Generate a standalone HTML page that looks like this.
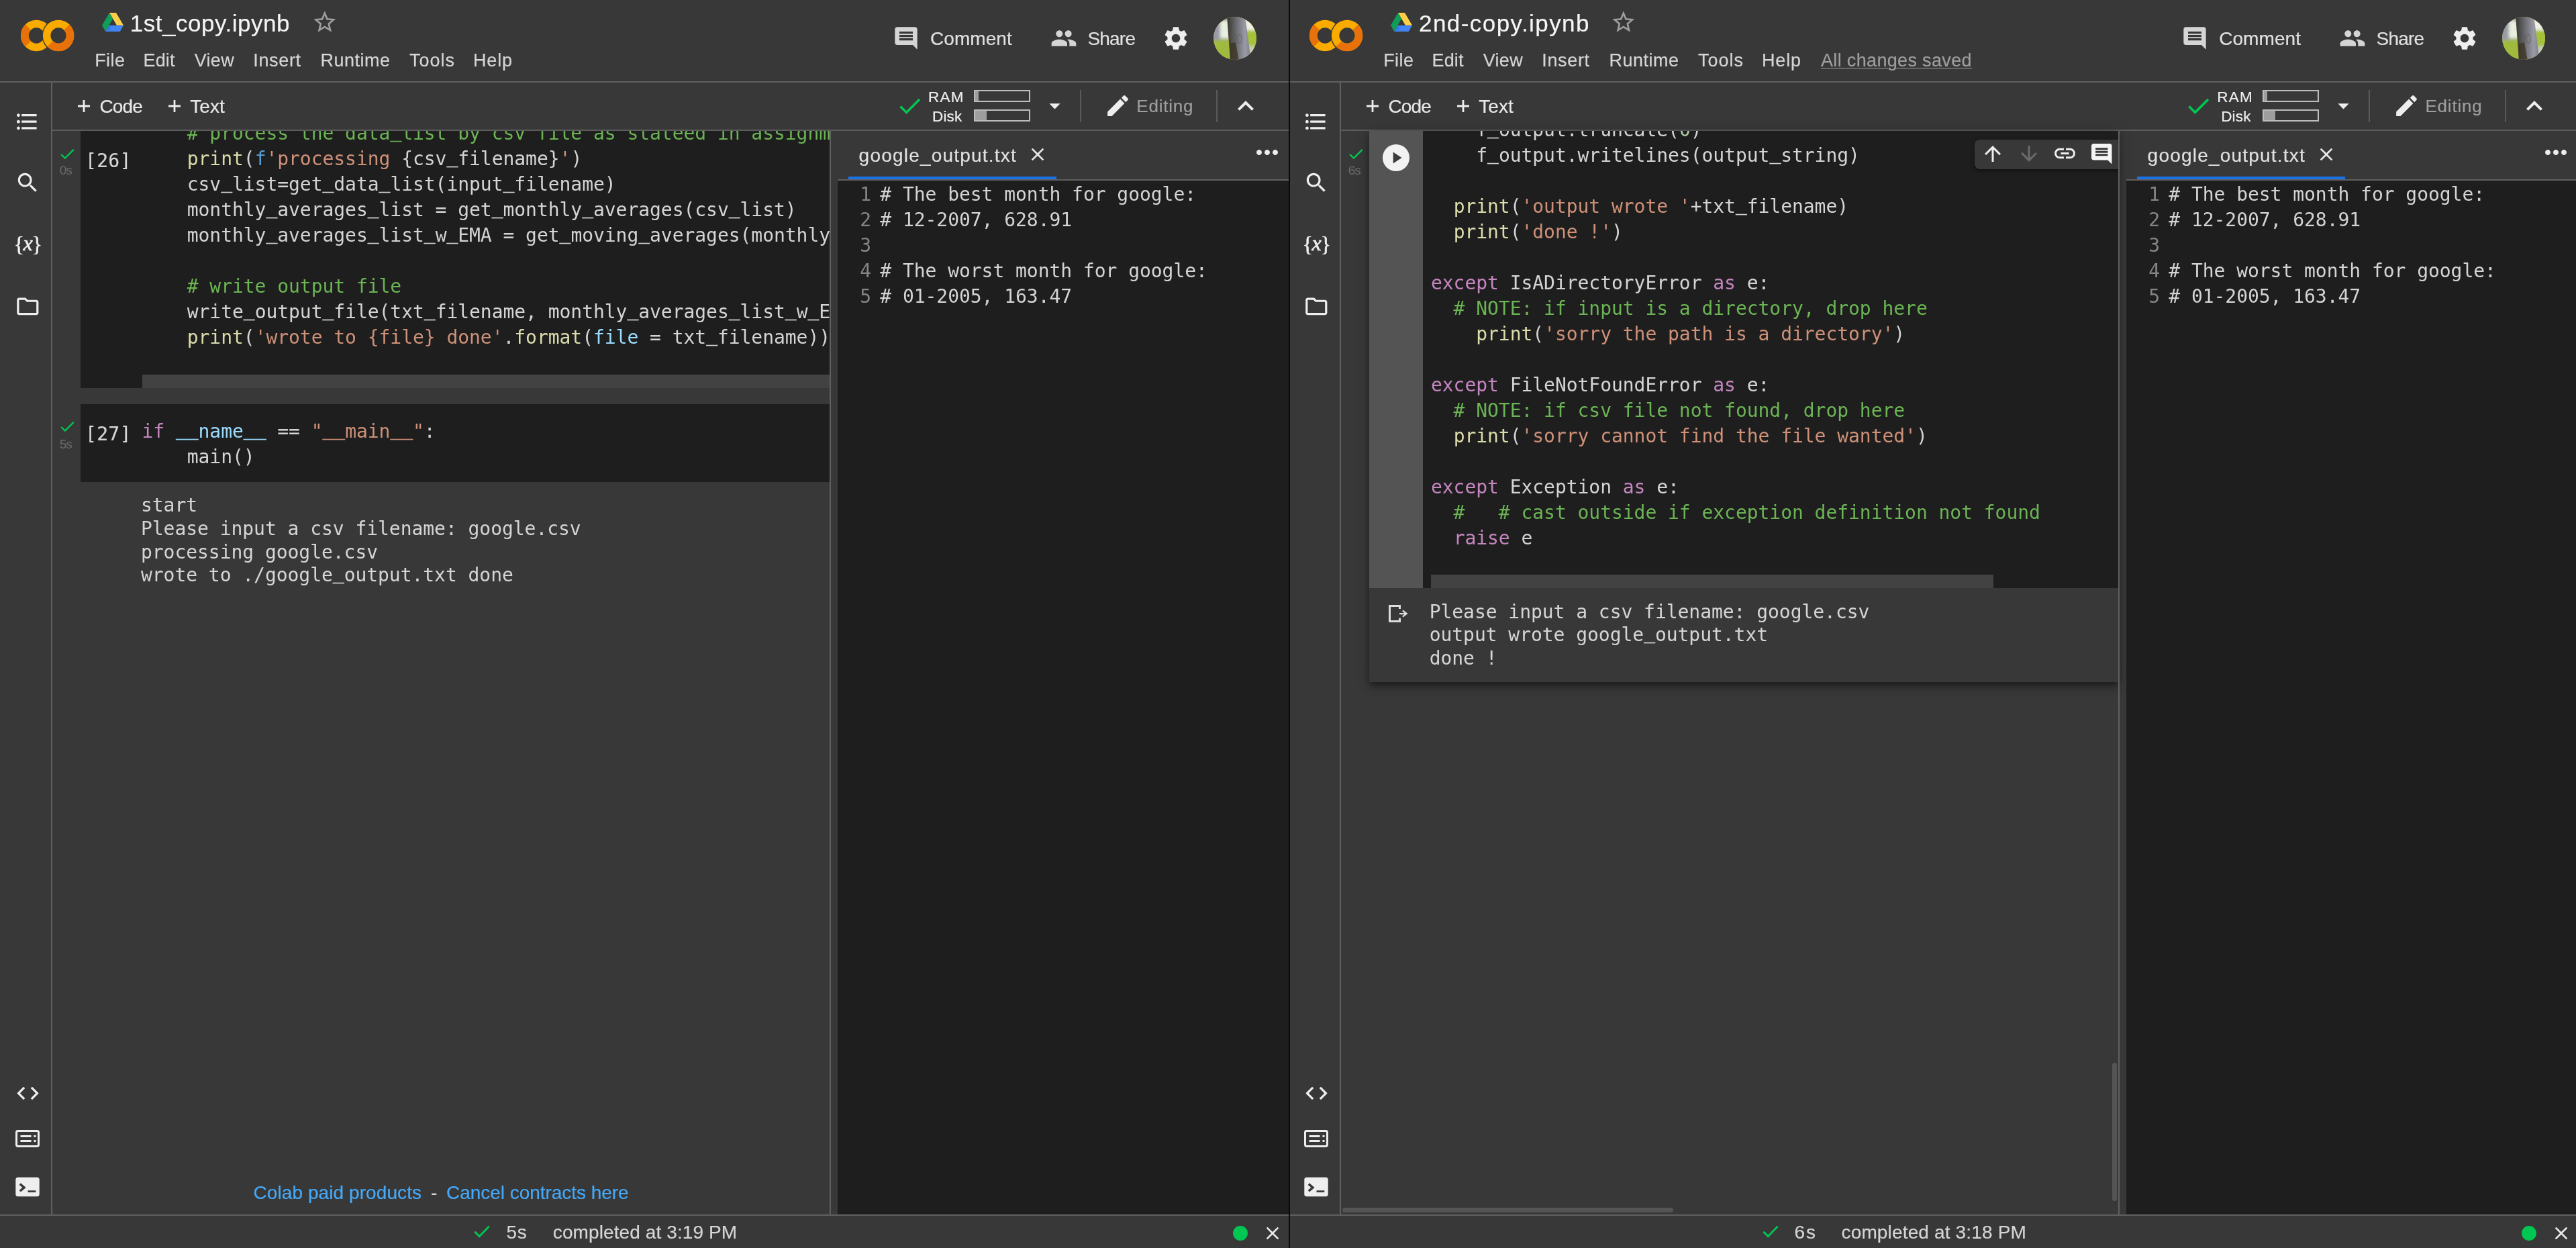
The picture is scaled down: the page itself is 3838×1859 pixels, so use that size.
<!DOCTYPE html>
<html lang="en"><head><meta charset="utf-8">
<title>Colab - 1st_copy.ipynb / 2nd-copy.ipynb</title>
<style>
*{box-sizing:border-box;margin:0;padding:0}
html,body{width:3838px;height:1859px;overflow:hidden;background:#383838}
body{position:relative;font-family:'Liberation Sans',sans-serif;color:#d5d5d5}
.win{will-change:transform;position:absolute;top:0;height:1859px;overflow:hidden;background:#383838}
.win>*{position:absolute;left:0;top:0}
header,nav,main,aside,footer,.tb,.cell,.links{position:absolute;left:0;top:0}
.hdr{width:100%;height:123px;border-bottom:2px solid #606060}
.tb{left:78px!important;top:123px!important;width:1842px;height:72px;border-bottom:2px solid #5c5c5c}
.tb>*{margin-left:-78px;margin-top:-123px}
.side{width:78px;height:1688px;top:123px!important;border-right:2px solid #606060}
.side>*{margin-top:-123px}
.st{width:100%;top:1809px!important;height:50px;border-top:2px solid #606060}
.st>*{margin-top:-1809px}
.t{position:absolute;white-space:pre;display:block;-webkit-text-stroke:.200px}
.ic,.r,.clip,.code,.out,.bar,.dot,.playb,.ctb{position:absolute}
.ic{display:block;overflow:visible}
.clip{overflow:hidden}
.code,.out{font-family:'DejaVu Sans Mono','Liberation Mono',monospace;font-size:28px;white-space:pre;color:#d4d4d4}
.code{line-height:38px;letter-spacing:-.045px}
.out{line-height:34.650px;letter-spacing:-.045px;color:#d5d5d5}
u{text-decoration:none;position:relative;top:-4.200px;-webkit-text-stroke:.400px}
.k{color:#c586c0}.s{color:#ce9178}.f{color:#dcdcaa}.v{color:#9cdcfe}.b{color:#569cd6}.n{color:#b5cea8}.c{color:#6bb454}
.ed .ln{display:inline-block;width:50px;text-align:right;color:#858585;margin-right:13.300px}
.bar{width:84px;height:18px;border:2px solid #bdbdbd}
.bar i{display:block;height:100%;background:#9e9e9e}
.dot{width:22px;height:22px;border-radius:50%;background:#00c752}
.playb{width:40px;height:40px;border-radius:50%;background:#f2f2f2}
.ctb{background:#383838;border-radius:8px 0 0 8px;box-shadow:0 2px 6px rgba(0,0,0,.45)}
.focused{position:absolute;background:#383838;box-shadow:0 4px 8px -2px rgba(0,0,0,.3),0 8px 10px rgba(0,0,0,.2),0 2px 20px rgba(0,0,0,.2)}
.divider{position:absolute;left:1920px;top:0;width:2px;height:1859px;background:#0a0a0a}
</style></head><body>
<section class="win" style="left:0px;width:1920px">
<header class="hdr">
<svg class="ic" style="left:29.5px;top:27.8px" width="82" height="50" viewBox="0 0 82 50"><defs><mask id="mca" maskUnits="userSpaceOnUse" x="0" y="0" width="82" height="50"><rect width="82" height="50" fill="#fff"/><circle cx="57.100" cy="25" r="24.700" fill="#000"/></mask></defs><g fill="none" stroke-width="11.500"><g mask="url(#mca)"><circle cx="24.200" cy="25" r="17.450" stroke="#f9ab00"/><path d="M11.860 12.660A17.450 17.450 0 0 0 11.860 37.340" stroke="#e8710a"/></g><circle cx="57.100" cy="25" r="17.450" stroke="#f9ab00"/><path d="M69.440 12.660A17.450 17.450 0 0 1 44.760 37.340" stroke="#e8710a"/></g></svg>
<svg class="ic" style="left:152px;top:19.3px" width="32" height="28" viewBox="0 0 32 28"><path d="M11 0h10l11 18.700H22z" fill="#ffcf48"/><path d="M11 0L0 18.700 5.200 28 16 9z" fill="#0f9d58"/><path d="M10.600 18.700h21.400L26.800 28H5.200z" fill="#4285f4"/><path d="M10.600 18.700L5.200 28l8.700-3.800z" fill="#2f6fde" opacity=".55"/></svg>
<span class="t title" style="left:193.80px;top:17.00px;font:400 35px/35px 'Liberation Sans', sans-serif;color:#f5f5f5;letter-spacing:0.514px;">1st_copy.ipynb</span>
<svg class="ic" style="left:464.00px;top:12.90px" width="39.6" height="39.6" viewBox="0 0 24 24"><path fill="#9e9e9e" d="M22 9.240l-7.190-.62L12 2 9.190 8.630 2 9.240l5.460 4.730L5.820 21 12 17.270 18.180 21l-1.630-7.030L22 9.240zM12 15.400l-3.760 2.270 1-4.280-3.320-2.880 4.380-.38L12 6.100l1.710 4.040 4.380.38-3.320 2.880 1 4.280L12 15.400z"/></svg>
<nav class="menu">
<span class="t" style="left:141.20px;top:77.00px;font:400 27px/27px 'Liberation Sans', sans-serif;color:#d5d5d5;letter-spacing:0.437px;">File</span>
<span class="t" style="left:213.50px;top:77.00px;font:400 27px/27px 'Liberation Sans', sans-serif;color:#d5d5d5;letter-spacing:0.159px;">Edit</span>
<span class="t" style="left:289.70px;top:77.00px;font:400 27px/27px 'Liberation Sans', sans-serif;color:#d5d5d5;letter-spacing:0.321px;">View</span>
<span class="t" style="left:377.30px;top:77.00px;font:400 27px/27px 'Liberation Sans', sans-serif;color:#d5d5d5;letter-spacing:0.655px;">Insert</span>
<span class="t" style="left:477.50px;top:77.00px;font:400 27px/27px 'Liberation Sans', sans-serif;color:#d5d5d5;letter-spacing:0.496px;">Runtime</span>
<span class="t" style="left:610.00px;top:77.00px;font:400 27px/27px 'Liberation Sans', sans-serif;color:#d5d5d5;letter-spacing:0.992px;">Tools</span>
<span class="t" style="left:705.00px;top:77.00px;font:400 27px/27px 'Liberation Sans', sans-serif;color:#d5d5d5;letter-spacing:0.829px;">Help</span>
</nav>
<svg class="ic" style="left:1329.70px;top:36.70px" width="40" height="40" viewBox="0 0 24 24"><path fill="#d5d5d5" d="M21.99 4c0-1.1-.89-2-1.99-2H4c-1.1 0-2 .9-2 2v12c0 1.1.9 2 2 2h14l4 4-.01-18zM18 14H6v-2h12v2zm0-3H6V9h12v2zm0-3H6V6h12v2z"/></svg>
<span class="t" style="left:1386.00px;top:44.30px;font:400 28px/28px 'Liberation Sans', sans-serif;color:#e0e0e0;letter-spacing:0.069px;">Comment</span>
<svg class="ic" style="left:1565.00px;top:37.40px" width="40" height="40" viewBox="0 0 24 24"><path fill="#d5d5d5" d="M16 11c1.66 0 2.99-1.34 2.99-3S17.66 5 16 5c-1.66 0-3 1.34-3 3s1.34 3 3 3zm-8 0c1.66 0 2.99-1.34 2.99-3S9.66 5 8 5C6.34 5 5 6.34 5 8s1.34 3 3 3zm0 2c-2.33 0-7 1.17-7 3.5V19h14v-2.500c0-2.33-4.67-3.5-7-3.5zm8 0c-.29 0-.62.02-.97.05 1.16.84 1.97 1.97 1.97 3.45V19h6v-2.500c0-2.33-4.67-3.5-7-3.5z"/></svg>
<span class="t" style="left:1620.40px;top:44.30px;font:400 28px/28px 'Liberation Sans', sans-serif;color:#e0e0e0;letter-spacing:-0.786px;">Share</span>
<svg class="ic" style="left:1731.00px;top:35.80px" width="42" height="42" viewBox="0 0 24 24"><path fill="#eee" d="M19.14 12.94c.04-.3.06-.61.06-.94 0-.32-.02-.64-.07-.94l2.03-1.58c.18-.14.23-.41.12-.61l-1.920-3.320c-.12-.22-.37-.29-.59-.22l-2.390.960c-.5-.38-1.030-.7-1.620-.94l-.36-2.540c-.04-.24-.24-.41-.48-.41h-3.840c-.24 0-.43.17-.47.41l-.36 2.540c-.59.24-1.130.57-1.620.94l-2.390-.960c-.22-.08-.47 0-.59.22L2.740 8.870c-.12.21-.08.47.12.61l2.030 1.580c-.05.3-.09.63-.09.94s.02.64.07.94l-2.030 1.580c-.18.14-.23.41-.12.61l1.920 3.320c.12.22.37.29.59.22l2.390-.960c.5.38 1.030.7 1.620.94l.36 2.540c.05.24.24.41.48.41h3.840c.24 0 .44-.17.47-.41l.36-2.540c.59-.24 1.130-.56 1.620-.94l2.390.960c.22.08.47 0 .59-.22l1.920-3.320c.12-.22.07-.47-.12-.61l-2.010-1.580zM12 15.600c-1.980 0-3.600-1.620-3.600-3.600s1.620-3.600 3.600-3.600 3.600 1.620 3.600 3.600-1.620 3.600-3.600 3.600z"/></svg>
<svg class="ic" style="left:1808px;top:25px" width="64" height="64" viewBox="0 0 64 64"><defs><clipPath id="ava"><circle cx="32" cy="32" r="32"/></clipPath><filter id="bla" x="-20%" y="-20%" width="140%" height="140%"><feGaussianBlur stdDeviation="2.200"/></filter><linearGradient id="tka" x1="0" x2="1"><stop offset="0" stop-color="#36352e"/><stop offset=".35" stop-color="#66666a"/><stop offset=".75" stop-color="#9a9aa8"/><stop offset="1" stop-color="#7e7e88"/></linearGradient></defs><g clip-path="url(#ava)"><rect width="64" height="64" fill="#a9bf3e"/><g filter="url(#bla)"><rect x="-4" y="-4" width="24" height="40" fill="#9a9aa6"/><rect x="10" y="6" width="14" height="26" fill="#e9efe0"/><rect x="4" y="34" width="20" height="34" fill="#9fba3c"/><rect x="46" y="0" width="22" height="22" fill="#eef0e4"/><rect x="48" y="20" width="20" height="26" fill="#a6c23a"/><rect x="50" y="44" width="20" height="24" fill="#c9cdb8"/></g><path d="M20 -2L47 -2L56 66L25 66z" fill="url(#tka)"/><path d="M24 40L33 38L38 66L25 66z" fill="#3a3320" opacity=".75"/><ellipse cx="30" cy="31" rx="3.400" ry="6" fill="none" stroke="#55544f" stroke-width="1" opacity=".6"/><ellipse cx="39" cy="33" rx="3.200" ry="6.500" fill="none" stroke="#55544f" stroke-width="1" opacity=".6"/></g></svg>
</header>
<div class="tb">
<svg class="ic" style="left:115px;top:148px" width="20" height="20" viewBox="0 0 20 20"><path d="M10 1v18M1 10h18" stroke="#eee" stroke-width="2.800"/></svg>
<span class="t" style="left:148.40px;top:144.80px;font:400 28px/28px 'Liberation Sans', sans-serif;color:#e8e8e8;letter-spacing:-0.822px;">Code</span>
<svg class="ic" style="left:250px;top:148px" width="20" height="20" viewBox="0 0 20 20"><path d="M10 1v18M1 10h18" stroke="#eee" stroke-width="2.800"/></svg>
<span class="t" style="left:283.30px;top:144.80px;font:400 28px/28px 'Liberation Sans', sans-serif;color:#e8e8e8;letter-spacing:0.043px;">Text</span>
<svg class="ic" style="left:1338.5px;top:144px" width="34" height="28" viewBox="0 0 34 28"><path d="M2.500 14.500l9 9L31 4" fill="none" stroke="#00c752" stroke-width="3.400"/></svg>
<span class="t" style="left:1383.00px;top:134.00px;font:400 22.5px/22.5px 'Liberation Sans', sans-serif;color:#eee;letter-spacing:1.222px;">RAM</span>
<span class="t" style="left:1389.00px;top:162.50px;font:400 22.5px/22.5px 'Liberation Sans', sans-serif;color:#eee;letter-spacing:0.167px;">Disk</span>
<div class="bar" style="left:1451px;top:134px"><i style="width:5px"></i></div>
<div class="bar" style="left:1451px;top:163px"><i style="width:17px"></i></div>
<svg class="ic" style="left:1551.50px;top:138.30px" width="39" height="39" viewBox="0 0 24 24"><path fill="#eee" d="M7 10l5 5 5-5z"/></svg>
<div class="r" style="left:1609px;top:134px;width:2px;height:48px;background:#5a5a5a;"></div>
<svg class="ic" style="left:1644.50px;top:137.30px" width="41" height="41" viewBox="0 0 24 24"><path fill="#eee" d="M3 17.25V21h3.75L17.81 9.94l-3.75-3.750L3 17.250zM20.710 7.040c.39-.39.39-1.020 0-1.410l-2.340-2.340c-.39-.39-1.020-.39-1.410 0l-1.830 1.830 3.750 3.750 1.830-1.830z"/></svg>
<span class="t" style="left:1693.30px;top:145.40px;font:400 26px/26px 'Liberation Sans', sans-serif;color:#9e9e9e;letter-spacing:0.777px;">Editing</span>
<div class="r" style="left:1812px;top:134px;width:2px;height:48px;background:#5a5a5a;"></div>
<svg class="ic" style="left:1832.00px;top:134.00px" width="48" height="48" viewBox="0 0 24 24"><path fill="#eee" d="M12 8l-6 6 1.410 1.410L12 10.830l4.590 4.580L18 14z"/></svg>
</div>
<nav class="side">
<svg class="ic" style="left:21.20px;top:161.80px" width="38.4" height="38.4" viewBox="0 0 24 24"><path fill="#eee" d="M4 10.5c-.83 0-1.5.67-1.5 1.5s.67 1.5 1.5 1.5 1.5-.67 1.5-1.5-.67-1.5-1.5-1.5zm0-6c-.83 0-1.5.67-1.5 1.5S3.17 7.5 4 7.5 5.5 6.83 5.5 6 4.83 4.5 4 4.5zm0 12c-.83 0-1.5.68-1.5 1.5s.68 1.5 1.5 1.5 1.5-.68 1.5-1.5-.67-1.5-1.5-1.5zM7 19h14v-2H7v2zm0-6h14v-2H7v2zm0-8v2h14V5H7z"/></svg>
<svg class="ic" style="left:21.60px;top:253.40px" width="38.4" height="38.4" viewBox="0 0 24 24"><path fill="#eee" d="M15.5 14h-.79l-.28-.27C15.41 12.59 16 11.11 16 9.5 16 5.91 13.09 3 9.5 3S3 5.91 3 9.5 5.91 16 9.5 16c1.61 0 3.09-.59 4.23-1.57l.27.28v.79l5 4.99L20.49 19l-4.99-5zm-6 0C7.01 14 5 11.99 5 9.5S7.01 5 9.5 5 14 7.01 14 9.5 11.99 14 9.5 14z"/></svg>
<span class="t" style="left:17px;top:346px;width:48px;text-align:center;font:400 32.500px/36px 'Liberation Serif',serif;color:#f0f0f0;letter-spacing:-1.400px;-webkit-text-stroke:.500px #f0f0f0">{<i style="font-size:32px;position:relative;top:-2.500px;-webkit-text-stroke:.700px #f0f0f0">x</i>}</span>
<svg class="ic" style="left:21.70px;top:437.20px" width="38.6" height="38.6" viewBox="0 0 24 24"><path fill="#eee" d="M9.17 6l2 2H20v10H4V6h5.17M10 4H4c-1.1 0-1.99.9-1.99 2L2 18c0 1.1.9 2 2 2h16c1.1 0 2-.9 2-2V8c0-1.1-.9-2-2-2h-8l-2-2z"/></svg>
<svg class="ic" style="left:21.50px;top:1608.70px" width="39" height="39" viewBox="0 0 24 24"><path fill="#eee" d="M9.4 16.6L4.8 12l4.6-4.6L8 6l-6 6 6 6 1.4-1.4zm5.2 0l4.6-4.6-4.6-4.6L16 6l6 6-6 6-1.4-1.4z"/></svg>
<svg class="ic" style="left:21px;top:1681.2px" width="40" height="30" viewBox="0 0 40 30" fill="none" stroke="#eee"><rect x="3.500" y="3.500" width="33" height="23" rx="2.500" stroke-width="3"/><path d="M9.500 11.500h16M9.500 18.500h16M29.500 11.500h3M29.500 18.500h3" stroke-width="3"/></svg>
<svg class="ic" style="left:21.3px;top:1752.1px" width="40" height="32" viewBox="0 0 40 32"><rect x="2.300" y="1.800" width="35.400" height="28.400" rx="3.500" fill="#eee"/><path d="M8.800 11.600l6.200 5.300-6.200 5.300" fill="none" stroke="#383838" stroke-width="3.400"/><path d="M20.500 22.700h11.800" stroke="#383838" stroke-width="2.800"/></svg>
</nav>
<main class="nb">
<div class="cell">
<div class="r" style="left:120px;top:195px;width:1116px;height:383px;background:#1e1e1e;"></div>
<svg class="ic" style="left:88.5px;top:220px" width="23" height="19" viewBox="0 0 24 20"><path d="M2.200 10.500l6 6L21.800 3" fill="none" stroke="#00c752" stroke-width="2.400"/></svg>
<span class="t" style="left:88.70px;top:244.00px;font:400 19px/19px 'Liberation Sans', sans-serif;color:#6b6b6b;letter-spacing:-1.067px;-webkit-text-stroke:0;">0s</span>
<span class="t" style="left:127.00px;top:225.50px;font:400 28px/28px 'DejaVu Sans Mono', 'Liberation Mono', monospace;color:#d5d5d5;letter-spacing:0.309px;">[26]</span>
<div class="clip" style="left:120px;top:195px;width:1116px;height:383px">
<pre class="code" style="left:91.5px;top:-15px;"><span class="c">    # process the data<u>_</u>list by csv file as stateed in assignment spec</span>
    <span class="f">print</span>(<span class="b">f</span><span class="s">'processing </span>{csv<u>_</u>filename}<span class="s">'</span>)
    csv<u>_</u>list=get<u>_</u>data<u>_</u>list(input<u>_</u>filename)
    monthly<u>_</u>averages<u>_</u>list = get<u>_</u>monthly<u>_</u>averages(csv<u>_</u>list)
    monthly<u>_</u>averages<u>_</u>list<u>_</u>w<u>_</u>EMA = get<u>_</u>moving<u>_</u>averages(monthly<u>_</u>averages<u>_</u>list)

<span class="c">    # write output file</span>
    write<u>_</u>output<u>_</u>file(txt<u>_</u>filename, monthly<u>_</u>averages<u>_</u>list<u>_</u>w<u>_</u>EMA)
    <span class="f">print</span>(<span class="s">'wrote to {file} done'</span>.<span class="f">format</span>(<span class="v">file</span> = txt<u>_</u>filename))
</pre>
<div class="r" style="left:91.5px;top:363px;width:1030px;height:20px;background:#424242;"></div>
</div>
</div>
<div class="cell">
<div class="r" style="left:120px;top:602px;width:1116px;height:116px;background:#1e1e1e;"></div>
<svg class="ic" style="left:88.5px;top:626px" width="23" height="19" viewBox="0 0 24 20"><path d="M2.200 10.500l6 6L21.800 3" fill="none" stroke="#00c752" stroke-width="2.400"/></svg>
<span class="t" style="left:88.70px;top:652.00px;font:400 19px/19px 'Liberation Sans', sans-serif;color:#6b6b6b;letter-spacing:-1.067px;-webkit-text-stroke:0;">5s</span>
<span class="t" style="left:127.00px;top:632.50px;font:400 28px/28px 'DejaVu Sans Mono', 'Liberation Mono', monospace;color:#d5d5d5;letter-spacing:0.309px;">[27]</span>
<pre class="code" style="left:211.5px;top:624px;"><span class="k">if</span> <span class="v"><u>_</u><u>_</u>name<u>_</u><u>_</u></span> == <span class="s">"<u>_</u><u>_</u>main<u>_</u><u>_</u>"</span>:
    main()</pre>
<pre class="out" style="left:210px;top:736.200px">start
Please input a csv filename: google.csv
processing google.csv
wrote to ./google<u>_</u>output.txt done</pre>
</div>
<div class="links">
<span class="t" style="left:377.50px;top:1763.40px;font:400 28px/28px 'Liberation Sans', sans-serif;color:#45a9f9;letter-spacing:0.081px;">Colab paid products</span>
<span class="t" style="left:642.00px;top:1763.40px;font:400 28px/28px 'Liberation Sans', sans-serif;color:#d5d5d5;letter-spacing:0.000px;">-</span>
<span class="t" style="left:665.00px;top:1763.40px;font:400 28px/28px 'Liberation Sans', sans-serif;color:#45a9f9;letter-spacing:-0.039px;">Cancel contracts here</span>
</div>
</main>
<aside class="pane">
<div class="r" style="left:1236px;top:195px;width:2px;height:1614px;background:#606060;"></div>
<div class="r" style="left:1248px;top:269px;width:672px;height:1540px;background:#1e1e1e;"></div>
<div class="r" style="left:1248px;top:267px;width:672px;height:2px;background:#606060;"></div>
<div class="r" style="left:1264px;top:263px;width:310px;height:4px;background:#1a73e8;"></div>
<span class="t" style="left:1279.60px;top:218.20px;font:400 28px/28px 'Liberation Sans', sans-serif;color:#e0e0e0;letter-spacing:1.209px;">google_output.txt</span>
<svg class="ic" style="left:1530.10px;top:214.20px" width="32" height="32" viewBox="0 0 24 24"><path fill="#e8e8e8" d="M19 6.410L17.590 5 12 10.590 6.410 5 5 6.410 10.590 12 5 17.590 6.410 19 12 13.410 17.590 19 19 17.590 13.410 12z"/></svg>
<svg class="ic" style="left:1864.00px;top:203.00px" width="48" height="48" viewBox="0 0 24 24"><path fill="#eee" d="M6 10c-1.100 0-2 .9-2 2s.9 2 2 2 2-.9 2-2-.9-2-2-2zm12 0c-1.100 0-2 .9-2 2s.9 2 2 2 2-.9 2-2-.9-2-2-2zm-6 0c-1.100 0-2 .9-2 2s.9 2 2 2 2-.9 2-2-.9-2-2-2z"/></svg>
<pre class="code ed" style="left:1248px;top:271px"><span class="ln">1</span># The best month for google:
<span class="ln">2</span># 12-2007, 628.91
<span class="ln">3</span>
<span class="ln">4</span># The worst month for google:
<span class="ln">5</span># 01-2005, 163.47</pre>
</aside>
<footer class="st">
<svg class="ic" style="left:705px;top:1820.800px" width="26.500" height="22.700" viewBox="0 0 28 24"><path d="M2.500 12.500l7.200 7.200L25 4" fill="none" stroke="#00c752" stroke-width="3"/></svg>
<span class="t" style="left:754.50px;top:1820.40px;font:400 28px/28px 'Liberation Sans', sans-serif;color:#d5d5d5;letter-spacing:0.728px;">5s</span>
<span class="t" style="left:823.80px;top:1820.40px;font:400 28px/28px 'Liberation Sans', sans-serif;color:#d5d5d5;letter-spacing:0.103px;">completed at 3:19 PM</span>
<div class="dot" style="left:1837px;top:1823.700px"></div>
<svg class="ic" style="left:1880.20px;top:1819.00px" width="32" height="32" viewBox="0 0 24 24"><path fill="#e8e8e8" d="M19 6.410L17.590 5 12 10.590 6.410 5 5 6.410 10.590 12 5 17.590 6.410 19 12 13.410 17.590 19 19 17.590 13.410 12z"/></svg>
</footer>
</section>
<section class="win" style="left:1920px;width:1918px">
<header class="hdr">
<svg class="ic" style="left:29.5px;top:27.8px" width="82" height="50" viewBox="0 0 82 50"><defs><mask id="mcb" maskUnits="userSpaceOnUse" x="0" y="0" width="82" height="50"><rect width="82" height="50" fill="#fff"/><circle cx="57.100" cy="25" r="24.700" fill="#000"/></mask></defs><g fill="none" stroke-width="11.500"><g mask="url(#mcb)"><circle cx="24.200" cy="25" r="17.450" stroke="#f9ab00"/><path d="M11.860 12.660A17.450 17.450 0 0 0 11.860 37.340" stroke="#e8710a"/></g><circle cx="57.100" cy="25" r="17.450" stroke="#f9ab00"/><path d="M69.440 12.660A17.450 17.450 0 0 1 44.760 37.340" stroke="#e8710a"/></g></svg>
<svg class="ic" style="left:152px;top:19.3px" width="32" height="28" viewBox="0 0 32 28"><path d="M11 0h10l11 18.700H22z" fill="#ffcf48"/><path d="M11 0L0 18.700 5.200 28 16 9z" fill="#0f9d58"/><path d="M10.600 18.700h21.400L26.800 28H5.200z" fill="#4285f4"/><path d="M10.600 18.700L5.200 28l8.700-3.800z" fill="#2f6fde" opacity=".55"/></svg>
<span class="t title" style="left:194.00px;top:17.00px;font:400 35px/35px 'Liberation Sans', sans-serif;color:#f5f5f5;letter-spacing:1.437px;">2nd-copy.ipynb</span>
<svg class="ic" style="left:479.00px;top:12.90px" width="39.6" height="39.6" viewBox="0 0 24 24"><path fill="#9e9e9e" d="M22 9.240l-7.190-.62L12 2 9.190 8.630 2 9.240l5.460 4.730L5.820 21 12 17.270 18.180 21l-1.630-7.030L22 9.240zM12 15.400l-3.760 2.270 1-4.280-3.320-2.880 4.380-.38L12 6.100l1.710 4.040 4.380.38-3.320 2.880 1 4.280L12 15.400z"/></svg>
<nav class="menu">
<span class="t" style="left:141.20px;top:77.00px;font:400 27px/27px 'Liberation Sans', sans-serif;color:#d5d5d5;letter-spacing:0.437px;">File</span>
<span class="t" style="left:213.50px;top:77.00px;font:400 27px/27px 'Liberation Sans', sans-serif;color:#d5d5d5;letter-spacing:0.159px;">Edit</span>
<span class="t" style="left:289.70px;top:77.00px;font:400 27px/27px 'Liberation Sans', sans-serif;color:#d5d5d5;letter-spacing:0.321px;">View</span>
<span class="t" style="left:377.30px;top:77.00px;font:400 27px/27px 'Liberation Sans', sans-serif;color:#d5d5d5;letter-spacing:0.655px;">Insert</span>
<span class="t" style="left:477.50px;top:77.00px;font:400 27px/27px 'Liberation Sans', sans-serif;color:#d5d5d5;letter-spacing:0.496px;">Runtime</span>
<span class="t" style="left:610.00px;top:77.00px;font:400 27px/27px 'Liberation Sans', sans-serif;color:#d5d5d5;letter-spacing:0.992px;">Tools</span>
<span class="t" style="left:705.00px;top:77.00px;font:400 27px/27px 'Liberation Sans', sans-serif;color:#d5d5d5;letter-spacing:0.829px;">Help</span>
<span class="t" style="left:793.00px;top:77.00px;font:400 27px/27px 'Liberation Sans', sans-serif;color:#9e9e9e;letter-spacing:0.336px;text-decoration:underline;text-decoration-thickness:1.200px;text-underline-offset:2px;">All changes saved</span>
</nav>
<svg class="ic" style="left:1329.90px;top:36.70px" width="40" height="40" viewBox="0 0 24 24"><path fill="#d5d5d5" d="M21.99 4c0-1.1-.89-2-1.99-2H4c-1.1 0-2 .9-2 2v12c0 1.1.9 2 2 2h14l4 4-.01-18zM18 14H6v-2h12v2zm0-3H6V9h12v2zm0-3H6V6h12v2z"/></svg>
<span class="t" style="left:1386.20px;top:44.30px;font:400 28px/28px 'Liberation Sans', sans-serif;color:#e0e0e0;letter-spacing:0.069px;">Comment</span>
<svg class="ic" style="left:1565.20px;top:37.40px" width="40" height="40" viewBox="0 0 24 24"><path fill="#d5d5d5" d="M16 11c1.66 0 2.99-1.34 2.99-3S17.66 5 16 5c-1.66 0-3 1.34-3 3s1.34 3 3 3zm-8 0c1.66 0 2.99-1.34 2.99-3S9.66 5 8 5C6.34 5 5 6.34 5 8s1.34 3 3 3zm0 2c-2.33 0-7 1.17-7 3.5V19h14v-2.500c0-2.33-4.67-3.5-7-3.5zm8 0c-.29 0-.62.02-.97.05 1.16.84 1.97 1.97 1.97 3.45V19h6v-2.500c0-2.33-4.67-3.5-7-3.5z"/></svg>
<span class="t" style="left:1620.60px;top:44.30px;font:400 28px/28px 'Liberation Sans', sans-serif;color:#e0e0e0;letter-spacing:-0.786px;">Share</span>
<svg class="ic" style="left:1731.20px;top:35.80px" width="42" height="42" viewBox="0 0 24 24"><path fill="#eee" d="M19.14 12.94c.04-.3.06-.61.06-.94 0-.32-.02-.64-.07-.94l2.03-1.58c.18-.14.23-.41.12-.61l-1.920-3.320c-.12-.22-.37-.29-.59-.22l-2.390.960c-.5-.38-1.030-.7-1.620-.94l-.36-2.540c-.04-.24-.24-.41-.48-.41h-3.840c-.24 0-.43.17-.47.41l-.36 2.540c-.59.24-1.130.57-1.620.94l-2.390-.960c-.22-.08-.47 0-.59.22L2.740 8.870c-.12.21-.08.47.12.61l2.030 1.580c-.05.3-.09.63-.09.94s.02.64.07.94l-2.030 1.580c-.18.14-.23.41-.12.61l1.920 3.320c.12.22.37.29.59.22l2.390-.960c.5.38 1.030.7 1.620.94l.36 2.540c.05.24.24.41.48.41h3.840c.24 0 .44-.17.47-.41l.36-2.540c.59-.24 1.130-.56 1.620-.94l2.390.960c.22.08.47 0 .59-.22l1.920-3.320c.12-.22.07-.47-.12-.61l-2.010-1.580zM12 15.600c-1.980 0-3.600-1.620-3.600-3.600s1.620-3.600 3.600-3.600 3.600 1.620 3.600 3.600-1.620 3.600-3.600 3.600z"/></svg>
<svg class="ic" style="left:1808.2px;top:25px" width="64" height="64" viewBox="0 0 64 64"><defs><clipPath id="avb"><circle cx="32" cy="32" r="32"/></clipPath><filter id="blb" x="-20%" y="-20%" width="140%" height="140%"><feGaussianBlur stdDeviation="2.200"/></filter><linearGradient id="tkb" x1="0" x2="1"><stop offset="0" stop-color="#36352e"/><stop offset=".35" stop-color="#66666a"/><stop offset=".75" stop-color="#9a9aa8"/><stop offset="1" stop-color="#7e7e88"/></linearGradient></defs><g clip-path="url(#avb)"><rect width="64" height="64" fill="#a9bf3e"/><g filter="url(#blb)"><rect x="-4" y="-4" width="24" height="40" fill="#9a9aa6"/><rect x="10" y="6" width="14" height="26" fill="#e9efe0"/><rect x="4" y="34" width="20" height="34" fill="#9fba3c"/><rect x="46" y="0" width="22" height="22" fill="#eef0e4"/><rect x="48" y="20" width="20" height="26" fill="#a6c23a"/><rect x="50" y="44" width="20" height="24" fill="#c9cdb8"/></g><path d="M20 -2L47 -2L56 66L25 66z" fill="url(#tkb)"/><path d="M24 40L33 38L38 66L25 66z" fill="#3a3320" opacity=".75"/><ellipse cx="30" cy="31" rx="3.400" ry="6" fill="none" stroke="#55544f" stroke-width="1" opacity=".6"/><ellipse cx="39" cy="33" rx="3.200" ry="6.500" fill="none" stroke="#55544f" stroke-width="1" opacity=".6"/></g></svg>
</header>
<div class="tb">
<svg class="ic" style="left:115px;top:148px" width="20" height="20" viewBox="0 0 20 20"><path d="M10 1v18M1 10h18" stroke="#eee" stroke-width="2.800"/></svg>
<span class="t" style="left:148.40px;top:144.80px;font:400 28px/28px 'Liberation Sans', sans-serif;color:#e8e8e8;letter-spacing:-0.822px;">Code</span>
<svg class="ic" style="left:250px;top:148px" width="20" height="20" viewBox="0 0 20 20"><path d="M10 1v18M1 10h18" stroke="#eee" stroke-width="2.800"/></svg>
<span class="t" style="left:283.30px;top:144.80px;font:400 28px/28px 'Liberation Sans', sans-serif;color:#e8e8e8;letter-spacing:0.043px;">Text</span>
<svg class="ic" style="left:1338.7px;top:144px" width="34" height="28" viewBox="0 0 34 28"><path d="M2.500 14.500l9 9L31 4" fill="none" stroke="#00c752" stroke-width="3.400"/></svg>
<span class="t" style="left:1383.20px;top:134.00px;font:400 22.5px/22.5px 'Liberation Sans', sans-serif;color:#eee;letter-spacing:1.222px;">RAM</span>
<span class="t" style="left:1389.20px;top:162.50px;font:400 22.5px/22.5px 'Liberation Sans', sans-serif;color:#eee;letter-spacing:0.167px;">Disk</span>
<div class="bar" style="left:1451.2px;top:134px"><i style="width:5px"></i></div>
<div class="bar" style="left:1451.2px;top:163px"><i style="width:17px"></i></div>
<svg class="ic" style="left:1551.70px;top:138.30px" width="39" height="39" viewBox="0 0 24 24"><path fill="#eee" d="M7 10l5 5 5-5z"/></svg>
<div class="r" style="left:1609.2px;top:134px;width:2px;height:48px;background:#5a5a5a;"></div>
<svg class="ic" style="left:1644.70px;top:137.30px" width="41" height="41" viewBox="0 0 24 24"><path fill="#eee" d="M3 17.25V21h3.75L17.81 9.94l-3.75-3.750L3 17.250zM20.710 7.040c.39-.39.39-1.020 0-1.410l-2.340-2.340c-.39-.39-1.020-.39-1.410 0l-1.830 1.830 3.750 3.750 1.830-1.830z"/></svg>
<span class="t" style="left:1693.50px;top:145.40px;font:400 26px/26px 'Liberation Sans', sans-serif;color:#9e9e9e;letter-spacing:0.777px;">Editing</span>
<div class="r" style="left:1812.2px;top:134px;width:2px;height:48px;background:#5a5a5a;"></div>
<svg class="ic" style="left:1832.20px;top:134.00px" width="48" height="48" viewBox="0 0 24 24"><path fill="#eee" d="M12 8l-6 6 1.410 1.410L12 10.830l4.590 4.580L18 14z"/></svg>
</div>
<nav class="side">
<svg class="ic" style="left:21.20px;top:161.80px" width="38.4" height="38.4" viewBox="0 0 24 24"><path fill="#eee" d="M4 10.5c-.83 0-1.5.67-1.5 1.5s.67 1.5 1.5 1.5 1.5-.67 1.5-1.5-.67-1.5-1.5-1.5zm0-6c-.83 0-1.5.67-1.5 1.5S3.17 7.5 4 7.5 5.5 6.83 5.5 6 4.83 4.5 4 4.5zm0 12c-.83 0-1.5.68-1.5 1.5s.68 1.5 1.5 1.5 1.5-.68 1.5-1.5-.67-1.5-1.5-1.5zM7 19h14v-2H7v2zm0-6h14v-2H7v2zm0-8v2h14V5H7z"/></svg>
<svg class="ic" style="left:21.60px;top:253.40px" width="38.4" height="38.4" viewBox="0 0 24 24"><path fill="#eee" d="M15.5 14h-.79l-.28-.27C15.41 12.59 16 11.11 16 9.5 16 5.91 13.09 3 9.5 3S3 5.91 3 9.5 5.91 16 9.5 16c1.61 0 3.09-.59 4.23-1.57l.27.28v.79l5 4.99L20.49 19l-4.99-5zm-6 0C7.01 14 5 11.99 5 9.5S7.01 5 9.5 5 14 7.01 14 9.5 11.99 14 9.5 14z"/></svg>
<span class="t" style="left:17px;top:346px;width:48px;text-align:center;font:400 32.500px/36px 'Liberation Serif',serif;color:#f0f0f0;letter-spacing:-1.400px;-webkit-text-stroke:.500px #f0f0f0">{<i style="font-size:32px;position:relative;top:-2.500px;-webkit-text-stroke:.700px #f0f0f0">x</i>}</span>
<svg class="ic" style="left:21.70px;top:437.20px" width="38.6" height="38.6" viewBox="0 0 24 24"><path fill="#eee" d="M9.17 6l2 2H20v10H4V6h5.17M10 4H4c-1.1 0-1.99.9-1.99 2L2 18c0 1.1.9 2 2 2h16c1.1 0 2-.9 2-2V8c0-1.1-.9-2-2-2h-8l-2-2z"/></svg>
<svg class="ic" style="left:21.50px;top:1608.70px" width="39" height="39" viewBox="0 0 24 24"><path fill="#eee" d="M9.4 16.6L4.8 12l4.6-4.6L8 6l-6 6 6 6 1.4-1.4zm5.2 0l4.6-4.6-4.6-4.6L16 6l6 6-6 6-1.4-1.4z"/></svg>
<svg class="ic" style="left:21px;top:1681.2px" width="40" height="30" viewBox="0 0 40 30" fill="none" stroke="#eee"><rect x="3.500" y="3.500" width="33" height="23" rx="2.500" stroke-width="3"/><path d="M9.500 11.500h16M9.500 18.500h16M29.500 11.500h3M29.500 18.500h3" stroke-width="3"/></svg>
<svg class="ic" style="left:21.3px;top:1752.1px" width="40" height="32" viewBox="0 0 40 32"><rect x="2.300" y="1.800" width="35.400" height="28.400" rx="3.500" fill="#eee"/><path d="M8.800 11.600l6.200 5.300-6.200 5.300" fill="none" stroke="#383838" stroke-width="3.400"/><path d="M20.500 22.700h11.800" stroke="#383838" stroke-width="2.800"/></svg>
</nav>
<main class="nb">
<div class="cell focused" style="left:120px;top:195px;width:1116px;height:821px">
</div>
<div class="r" style="left:120px;top:195px;width:80px;height:681px;background:#545454;"></div>
<div class="r" style="left:200px;top:195px;width:1036px;height:681px;background:#1e1e1e;"></div>
<svg class="ic" style="left:88.5px;top:220px" width="23" height="19" viewBox="0 0 24 20"><path d="M2.200 10.500l6 6L21.800 3" fill="none" stroke="#00c752" stroke-width="2.400"/></svg>
<span class="t" style="left:88.70px;top:244.00px;font:400 19px/19px 'Liberation Sans', sans-serif;color:#6b6b6b;letter-spacing:-1.067px;-webkit-text-stroke:0;">6s</span>
<div class="playb" style="left:140px;top:215px"><svg width="40" height="40" viewBox="0 0 24 24"><path fill="#3c3c3c" d="M9.400 6.900v10.200l7.700-5.100z"/></svg></div>
<div class="clip" style="left:200px;top:195px;width:1036px;height:681px">
<pre class="code" style="left:12px;top:-20px;">    f<u>_</u>output.truncate(<span class="n">0</span>)
    f<u>_</u>output.writelines(output<u>_</u>string)

  <span class="f">print</span>(<span class="s">'output wrote '</span>+txt<u>_</u>filename)
  <span class="f">print</span>(<span class="s">'done !'</span>)

<span class="k">except</span> IsADirectoryError <span class="k">as</span> e:
<span class="c">  # NOTE: if input is a directory, drop here</span>
    <span class="f">print</span>(<span class="s">'sorry the path is a directory'</span>)

<span class="k">except</span> FileNotFoundError <span class="k">as</span> e:
<span class="c">  # NOTE: if csv file not found, drop here</span>
  <span class="f">print</span>(<span class="s">'sorry cannot find the file wanted'</span>)

<span class="k">except</span> Exception <span class="k">as</span> e:
<span class="c">  #   # cast outside if exception definition not found</span>
  <span class="k">raise</span> e
</pre>
<div class="r" style="left:11.5px;top:661px;width:838.5px;height:20px;background:#424242;"></div>
</div>
<div class="clip" style="left:1000px;top:195px;width:236px;height:80px"><div class="ctb" style="left:22px;top:12.500px;width:230px;height:44px"></div></div>
<svg class="ic" style="left:1031.10px;top:211.00px" width="36" height="36" viewBox="0 0 24 24"><path fill="#eee" d="M4 12l1.410 1.410L11 7.830V20h2V7.830l5.580 5.590L20 12l-8-8-8 8z"/></svg>
<svg class="ic" style="left:1085.20px;top:211.00px" width="36" height="36" viewBox="0 0 24 24"><path fill="#6a6a6a" d="M20 12l-1.410-1.410L13 16.170V4h-2v12.170l-5.580-5.590L4 12l8 8 8-8z"/></svg>
<svg class="ic" style="left:1138.30px;top:210.30px" width="37" height="37" viewBox="0 0 24 24"><path fill="#eee" d="M3.900 12c0-1.710 1.390-3.100 3.100-3.100h4V7H7c-2.760 0-5 2.240-5 5s2.240 5 5 5h4v-1.900H7c-1.710 0-3.100-1.390-3.100-3.100zM8 13h8v-2H8v2zm9-6h-4v1.900h4c1.710 0 3.100 1.390 3.100 3.100s-1.390 3.100-3.100 3.100h-4V17h4c2.760 0 5-2.240 5-5s-2.240-5-5-5z"/></svg>
<svg class="ic" style="left:1192.85px;top:210.55px" width="36.5" height="36.5" viewBox="0 0 24 24"><path fill="#f5f5f5" d="M21.99 4c0-1.1-.89-2-1.99-2H4c-1.1 0-2 .9-2 2v12c0 1.1.9 2 2 2h14l4 4-.01-18zM18 14H6v-2h12v2zm0-3H6V9h12v2zm0-3H6V6h12v2z"/></svg>
<svg class="ic" style="left:148px;top:900px" width="32" height="28" viewBox="0 0 32 28" fill="none" stroke="#dcdcdc"><path d="M17.500 7V2.500H2.500v23h15v-4.800" stroke-width="3"/><path d="M17 14.100h10M21.800 9.500l5.900 4.600-5.900 4.600" stroke-width="2.300"/></svg>
<pre class="out" style="left:209.700px;top:894.500px">Please input a csv filename: google.csv
output wrote google<u>_</u>output.txt
done !</pre>
<div class="r" style="left:1226.5px;top:1583px;width:7px;height:206px;background:#555;border-radius:4px"></div>
<div class="r" style="left:80px;top:1799px;width:493px;height:7px;background:#555;border-radius:4px"></div>
</main>
<aside class="pane">
<div class="r" style="left:1236px;top:195px;width:2px;height:1614px;background:#606060;"></div>
<div class="r" style="left:1248px;top:269px;width:670px;height:1540px;background:#1e1e1e;"></div>
<div class="r" style="left:1248px;top:267px;width:670px;height:2px;background:#606060;"></div>
<div class="r" style="left:1264px;top:263px;width:310px;height:4px;background:#1a73e8;"></div>
<span class="t" style="left:1279.60px;top:218.20px;font:400 28px/28px 'Liberation Sans', sans-serif;color:#e0e0e0;letter-spacing:1.209px;">google_output.txt</span>
<svg class="ic" style="left:1530.10px;top:214.20px" width="32" height="32" viewBox="0 0 24 24"><path fill="#e8e8e8" d="M19 6.410L17.590 5 12 10.590 6.410 5 5 6.410 10.590 12 5 17.590 6.410 19 12 13.410 17.590 19 19 17.590 13.410 12z"/></svg>
<svg class="ic" style="left:1864.00px;top:203.00px" width="48" height="48" viewBox="0 0 24 24"><path fill="#eee" d="M6 10c-1.100 0-2 .9-2 2s.9 2 2 2 2-.9 2-2-.9-2-2-2zm12 0c-1.100 0-2 .9-2 2s.9 2 2 2 2-.9 2-2-.9-2-2-2zm-6 0c-1.100 0-2 .9-2 2s.9 2 2 2 2-.9 2-2-.9-2-2-2z"/></svg>
<pre class="code ed" style="left:1248px;top:271px"><span class="ln">1</span># The best month for google:
<span class="ln">2</span># 12-2007, 628.91
<span class="ln">3</span>
<span class="ln">4</span># The worst month for google:
<span class="ln">5</span># 01-2005, 163.47</pre>
</aside>
<footer class="st">
<svg class="ic" style="left:704.500px;top:1820.800px" width="26.500" height="22.700" viewBox="0 0 28 24"><path d="M2.500 12.500l7.200 7.200L25 4" fill="none" stroke="#00c752" stroke-width="3"/></svg>
<span class="t" style="left:753.50px;top:1820.40px;font:400 28px/28px 'Liberation Sans', sans-serif;color:#d5d5d5;letter-spacing:1.928px;">6s</span>
<span class="t" style="left:823.50px;top:1820.40px;font:400 28px/28px 'Liberation Sans', sans-serif;color:#d5d5d5;letter-spacing:0.155px;">completed at 3:18 PM</span>
<div class="dot" style="left:1837px;top:1823.700px"></div>
<svg class="ic" style="left:1880.20px;top:1819.00px" width="32" height="32" viewBox="0 0 24 24"><path fill="#e8e8e8" d="M19 6.410L17.590 5 12 10.590 6.410 5 5 6.410 10.590 12 5 17.590 6.410 19 12 13.410 17.590 19 19 17.590 13.410 12z"/></svg>
</footer>
</section>
<div class="divider"></div>
</body></html>
